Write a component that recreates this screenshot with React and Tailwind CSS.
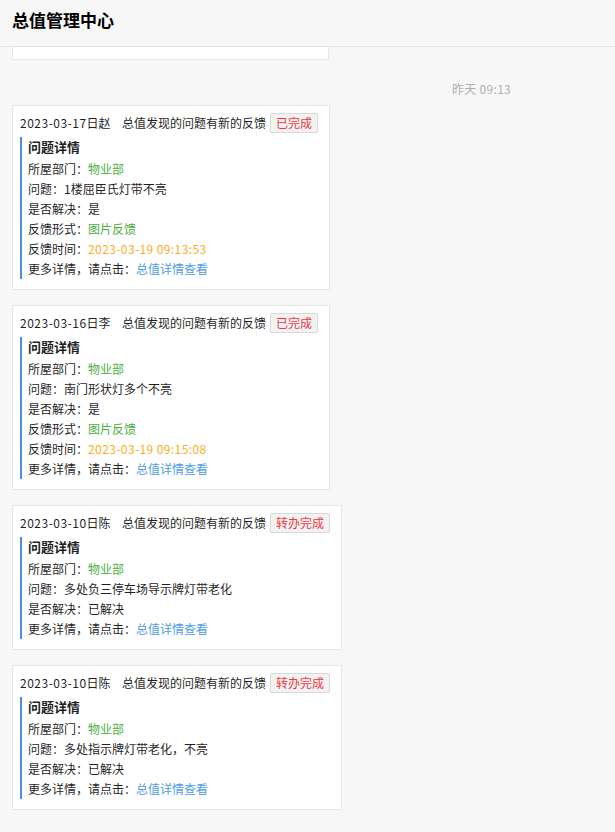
const font = { fontFamily: '"Noto Sans CJK SC", "Noto Sans", sans-serif' }

const records = [
  {
    day: "2023-03-17",
    name: "日赵",
    status: "已完成",
    dept: "物业部",
    issue: "1楼屈臣氏灯带不亮",
    solved: "是",
    form: "图片反馈",
    time: "2023-03-19 09:13:53",
  },
  {
    day: "2023-03-16",
    name: "日李",
    status: "已完成",
    dept: "物业部",
    issue: "南门形状灯多个不亮",
    solved: "是",
    form: "图片反馈",
    time: "2023-03-19 09:15:08",
  },
  {
    day: "2023-03-10",
    name: "日陈",
    status: "转办完成",
    dept: "物业部",
    issue: "多处负三停车场导示牌灯带老化",
    solved: "已解决",
  },
  {
    day: "2023-03-10",
    name: "日陈",
    status: "转办完成",
    dept: "物业部",
    issue: "多处指示牌灯带老化，不亮",
    solved: "已解决",
  },
]

function Card({ r }) {
  return (
    <div className="ml-3 w-fit bg-white border border-[#e6e6e6] pl-[7px] pr-[11px] pt-[7px] pb-[10px]">
      {/* header row */}
      <div className="flex items-center h-5 text-[12px] text-[#1f1f1f]">
        <span className="inline-block w-[102px] whitespace-nowrap">
          <span className="tracking-[0.5px]">{r.day}</span>{r.name}
        </span>
        <span className="whitespace-nowrap">总值发现的问题有新的反馈</span>
        <span className="ml-1 h-5 px-[5px] flex items-center border border-[#d9d9d9] bg-[#f2f2f2] rounded-[2px] text-[#f0353f] whitespace-nowrap">
          {r.status}
        </span>
      </div>

      {/* details */}
      <div className="mt-[4px] border-l-2 border-[#4a90e2] pl-[6px] text-[12px] leading-[20px] text-[#1f1f1f]">
        <p className="font-bold text-[13px] mb-[2px]">问题详情</p>
        <p>所屋部门：<span className="text-[#4caf3f]">{r.dept}</span></p>
        <p>问题：{r.issue}</p>
        <p>是否解决：{r.solved}</p>
        {r.form && (
          <p>反馈形式：<span className="text-[#4caf3f]">{r.form}</span></p>
        )}
        {r.time && (
          <p>反馈时间：<span className="text-[#fbad1a] tracking-[0.4px]">{r.time}</span></p>
        )}
        <p>更多详情，请点击：<span className="text-[#4d9be6]">总值详情查看</span></p>
      </div>
    </div>
  )
}

export default function App() {
  return (
    <div className="min-h-[832px] bg-[#f7f7f7]" style={font}>
      {/* TOP BAR */}
      <div className="h-[47px] border-b border-[#e4e4e4] flex items-center pl-3 pb-[7px]">
        <h1 className="text-[17px] font-bold text-black">总值管理中心</h1>
      </div>

      {/* previous message tail */}
      <div className="ml-3 w-[317px] h-[13px] bg-white border border-t-0 border-[#e6e6e6]"></div>

      <div className="mt-[19px] mb-[6px] pl-[452px] text-[12px] leading-[20px] text-[#b0b0b0]">
        <span className="tracking-[0.3px]">昨天 09:13</span>
      </div>

      <div className="flex flex-col gap-[15px] pb-6">
        {records.map((r, i) => (
          <Card key={i} r={r} />
        ))}
      </div>
    </div>
  )
}
